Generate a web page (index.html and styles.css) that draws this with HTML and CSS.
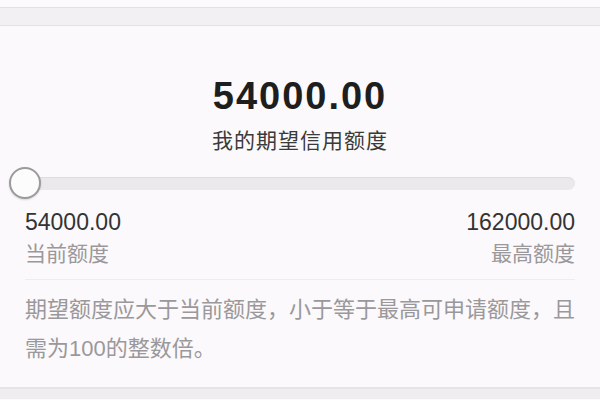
FILE: index.html
```html
<!DOCTYPE html>
<html lang="zh-CN">
<head>
<meta charset="utf-8">
<link rel="stylesheet" href="styles.css">
</head>
<body>
<div class="top-gap"></div>
<div class="band"></div>
<main class="card">
  <div class="amount">54000.00</div>
  <div class="amount-label">我的期望信用额度</div>
  <div class="slider">
    <div class="track"></div>
    <div class="thumb"></div>
  </div>
  <div class="range">
    <div class="range-item">
      <div class="range-value">54000.00</div>
      <div class="range-label">当前额度</div>
    </div>
    <div class="range-item right">
      <div class="range-value">162000.00</div>
      <div class="range-label">最高额度</div>
    </div>
  </div>
  <div class="divider"></div>
  <p class="note">期望额度应大于当前额度，小于等于最高可申请额度，且需为100的整数倍。</p>
</main>
<div class="bottom"></div>
</body>
</html>
```
FILE: styles.css
```css
html, body {
  margin: 0;
  padding: 0;
}
body {
  width: 600px;
  height: 400px;
  overflow: hidden;
  background: #fbf9fb;
  font-family: "Liberation Sans", "Noto Sans CJK SC", sans-serif;
}
.top-gap {
  height: 7px;
  background: #fcfafc;
}
.band {
  height: 17px;
  background: #f2f0f2;
  border-top: 1px solid #e3e1e3;
  border-bottom: 1px solid #e3e1e3;
}
.card {
  height: 363px;
  box-sizing: border-box;
  padding: 0 25px;
  background: #fbf9fb;
  border-bottom: 2px solid #e6e4e6;
}
.amount {
  padding-top: 48px;
  text-align: center;
  font-size: 38px;
  line-height: 44px;
  font-weight: bold;
  letter-spacing: 2px;
  color: #1e1e1e;
}
.amount-label {
  margin-top: 9px;
  text-align: center;
  font-size: 21px;
  line-height: 28px;
  letter-spacing: 1px;
  color: #3a3a3a;
}
.slider {
  position: relative;
  margin-top: 12px;
  height: 32px;
  display: flex;
  align-items: center;
}
.track {
  flex: 1;
  height: 13px;
  border-radius: 7px;
  background: #ebe9eb;
  box-shadow: inset 0 1px 1px rgba(0,0,0,0.06);
}
.thumb {
  position: absolute;
  left: -16px;
  top: 0;
  width: 28px;
  height: 28px;
  border-radius: 50%;
  border: 2px solid #9c9a9c;
  background: #fdfcfd;
  box-shadow: 0 1px 2px rgba(0,0,0,0.15);
}
.range {
  display: flex;
  justify-content: space-between;
  margin-top: 8px;
}
.range-item.right {
  text-align: right;
}
.range-value {
  font-size: 23px;
  line-height: 30px;
  color: #333;
}
.range-label {
  margin-top: 3px;
  font-size: 21px;
  line-height: 28px;
  color: #9a989a;
}
.divider {
  margin-top: 11px;
  height: 1px;
  background: #eeecee;
}
.note {
  margin: 10px 0 0;
  font-size: 22px;
  line-height: 39px;
  color: #9a989a;
}
.bottom {
  height: 10px;
  background: #efedef;
}
```
